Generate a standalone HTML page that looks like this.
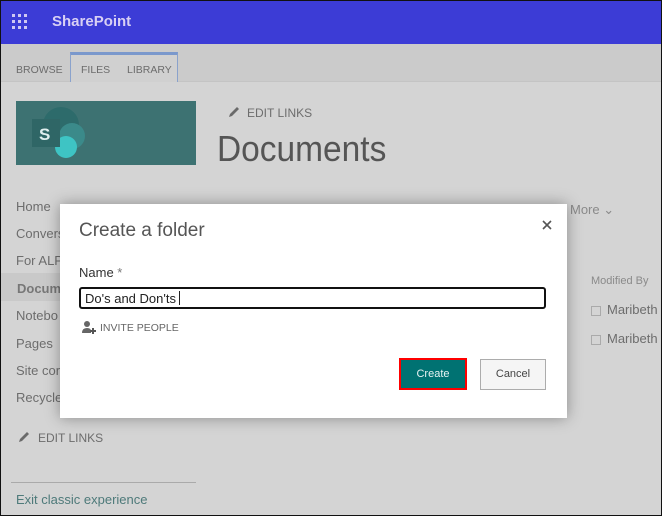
<!DOCTYPE html>
<html><head><meta charset="utf-8"><style>
*{margin:0;padding:0;box-sizing:border-box}
body{width:662px;height:516px;overflow:hidden;font-family:"Liberation Sans",sans-serif;background:#d4d4d4;position:relative}
.frame{position:absolute;inset:0;border:1px solid #111;border-top:0;pointer-events:none;z-index:10}
.top{position:absolute;left:0;top:0;width:662px;height:44px;background:#3c3cd6;border-top:1px solid #111}
.waffle{position:absolute;left:12px;top:13px}
.sp{position:absolute;left:52px;top:12px;color:#d8d0f4;font-weight:bold;font-size:15px}
.ribbon{position:absolute;left:0;top:44px;width:662px;height:38px;background:#cbcbcb;border-bottom:1px solid #c4c4c4}
.tab{position:absolute;font-size:10.5px;color:#6c6c6c}
.tabbox{position:absolute;left:70px;top:52px;width:108px;height:30px;border:1px solid #8aa2cc;border-top:3px solid #7a98cc;border-bottom:0;background:#d0d0d0}
.logo{position:absolute;left:16px;top:101px;width:180px;height:64px;background:#3d7272}
.t{position:absolute;color:#6d6d6d;font-size:13px}
.dlg{position:absolute;left:60px;top:204px;width:507px;height:214px;background:#fff;box-shadow:0 0 14px rgba(0,0,0,.35)}
</style></head><body>
<div class="top">
<svg class="waffle" width="17" height="17" fill="#cfc8f2"><g>
<rect x="0" y="0" width="3" height="3"/><rect x="6" y="0" width="3" height="3"/><rect x="12" y="0" width="3" height="3"/>
<rect x="0" y="6" width="3" height="3"/><rect x="6" y="6" width="3" height="3"/><rect x="12" y="6" width="3" height="3"/>
<rect x="0" y="12" width="3" height="3"/><rect x="6" y="12" width="3" height="3"/><rect x="12" y="12" width="3" height="3"/></g></svg>
<div class="sp">SharePoint</div>
</div>
<div class="ribbon"></div>
<div class="tabbox"></div>
<div class="tab" style="left:16px;top:64px">BROWSE</div>
<div class="tab" style="left:81px;top:64px">FILES</div>
<div class="tab" style="left:127px;top:64px">LIBRARY</div>
<div class="logo">
<svg width="180" height="64">
<circle cx="45" cy="24" r="18" fill="#2d6b6b"/>
<circle cx="56" cy="35" r="13" fill="#3b8a8a"/>
<circle cx="50" cy="46" r="11" fill="#3ec4c4"/>
<rect x="16" y="18" width="28" height="28" fill="#2f6666"/>
<text x="23" y="39" font-family="Liberation Sans" font-weight="bold" font-size="17" fill="#e0eeee">S</text>
</svg></div>
<svg style="position:absolute;left:228px;top:106px" width="12" height="12"><path d="M1 11 L2 8 L9 1 L11 3 L4 10 Z" fill="#6a6a6a"/></svg>
<div class="t" style="left:247px;top:106px;font-size:12px">EDIT LINKS</div>
<div class="t" style="left:217px;top:128px;font-size:36px;color:#555;transform:scaleX(0.93);transform-origin:0 0">Documents</div>
<div class="t" style="left:570px;top:202px;color:#8a8a8a">More &#8964;</div>
<div class="t" style="left:591px;top:275px;font-size:11px;color:#8a8a8a">Modified By</div>
<div style="position:absolute;left:591px;top:306px;width:10px;height:10px;border:1px solid #aaa"></div>
<div class="t" style="left:607px;top:302px">Maribeth</div>
<div style="position:absolute;left:591px;top:335px;width:10px;height:10px;border:1px solid #aaa"></div>
<div class="t" style="left:607px;top:331px">Maribeth</div>
<div class="t" style="left:16px;top:199px">Home</div>
<div class="t" style="left:16px;top:226px">Convers</div>
<div class="t" style="left:16px;top:253px">For ALP</div>
<div style="position:absolute;left:1px;top:273px;width:60px;height:28px;background:#c9c9c9"></div>
<div class="t" style="left:17px;top:281px;font-weight:bold;color:#777">Docum</div>
<div class="t" style="left:16px;top:308px">Notebo</div>
<div class="t" style="left:16px;top:336px">Pages</div>
<div class="t" style="left:16px;top:363px">Site cor</div>
<div class="t" style="left:16px;top:390px">Recycle</div>
<svg style="position:absolute;left:18px;top:431px" width="12" height="12"><path d="M1 11 L2 8 L9 1 L11 3 L4 10 Z" fill="#6a6a6a"/></svg>
<div class="t" style="left:38px;top:431px;font-size:12px">EDIT LINKS</div>
<div style="position:absolute;left:11px;top:482px;width:185px;height:1px;background:#aaa"></div>
<div class="t" style="left:16px;top:492px;color:#4e7a7a">Exit classic experience</div>
<div class="dlg">
<div style="position:absolute;left:19px;top:16px;font-size:19px;color:#555">Create a folder</div>
<svg style="position:absolute;left:482px;top:16px" width="10" height="10"><path d="M1 1 L9 9 M9 1 L1 9" stroke="#555" stroke-width="1.6"/></svg>
<div style="position:absolute;left:19px;top:61px;font-size:13px;color:#333">Name <span style="color:#777">*</span></div>
<div style="position:absolute;left:19px;top:83px;width:467px;height:22px;border:2px solid #111;border-radius:3px"></div>
<div style="position:absolute;left:25px;top:87px;font-size:13px;color:#222">Do's and Don'ts<span style="display:inline-block;width:1px;height:14px;background:#222;margin-left:3px;vertical-align:-2px"></span></div>
<svg style="position:absolute;left:21px;top:116px" width="15" height="15"><circle cx="6" cy="4" r="3" fill="#666"/><path d="M1 13 Q1 8 6 8 Q10 8 10 11 L10 13 Z" fill="#666"/><path d="M9 11 H15 M12 8 V14" stroke="#555" stroke-width="2"/></svg>
<div style="position:absolute;left:40px;top:118px;font-size:10.5px;color:#666">INVITE PEOPLE</div>
<div style="position:absolute;left:339px;top:154px;width:68px;height:32px;border:2px solid #f00;background:#007272;color:#e6f2f2;font-size:11px;text-align:center;line-height:28px">Create</div>
<div style="position:absolute;left:420px;top:155px;width:66px;height:31px;border:1px solid #acacac;background:#f5f5f5;color:#444;font-size:11px;text-align:center;line-height:29px">Cancel</div>
</div>
<div class="frame"></div>
</body></html>
